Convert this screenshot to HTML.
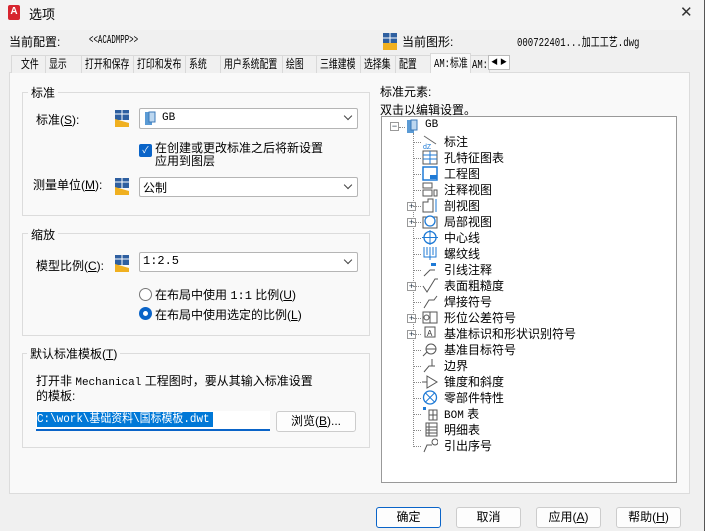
<!DOCTYPE html>
<html><head><meta charset="utf-8"><style>
*{box-sizing:border-box;margin:0;padding:0}
body{width:705px;height:531px;overflow:hidden;background:#f0f0f0;font-family:"Liberation Sans","Noto Sans CJK SC",sans-serif;font-size:12px;color:#000;position:relative}
.a{position:absolute;white-space:nowrap}
.mono{font-family:"Liberation Mono","Noto Sans CJK SC",monospace}
.sx{display:inline-block;transform-origin:0 50%}
.tab{position:absolute;top:55px;height:18px;border:1px solid #d9d9d9;border-bottom:none;background:#f0f0f0;font-size:12px;line-height:16px;padding-left:3px;white-space:nowrap;overflow:hidden}
.tab span.t{display:inline-block;transform:scaleX(0.74);transform-origin:0 50%}
.grp{position:absolute;border:1px solid #dcdcdc}
.gl{position:absolute;background:#f9f9f9;padding:0 3px;font-size:12px;white-space:nowrap}
.combo{position:absolute;height:20px;background:#fff;border:1px solid #b5b5b5;border-radius:2px}
.combo:after{content:"";position:absolute;right:6px;top:4px;width:5px;height:5px;border-right:1px solid #444;border-bottom:1px solid #444;transform:rotate(45deg)}
.btn{position:absolute;top:507px;width:65px;height:21px;border:1px solid #ccc;border-radius:3px;background:#fdfdfd;text-align:center;line-height:19px}
.row{position:absolute;left:444px;font-size:12px;line-height:16px;white-space:nowrap}
.ti{position:absolute;left:422px;width:16px;height:15px}
.hd{position:absolute;left:413px;width:8px;border-top:1px dotted #888}
.pl{position:absolute;left:407px;width:9px;height:9px;border:1px solid #999;background:#fff;font-size:9px;line-height:7px;text-align:center;color:#234}
</style></head><body>
<div class="a" style="left:0;top:0;width:705px;height:30px;background:#f3f3f3"></div>
<div class="a" style="left:8px;top:5px;width:12px;height:15px;background:#d7252f;border-radius:2px;color:#fff;font-size:10px;font-weight:bold;text-align:center;line-height:13px">A</div>
<div class="a" style="left:29px;top:4px;font-size:13px">选项</div>
<div class="a" style="left:680px;top:3px;font-size:15px;color:#333">✕</div>
<div class="a" style="left:704px;top:0;width:1px;height:531px;background:#555"></div>

<div class="a" style="left:9px;top:33px">当前配置:</div>
<div class="a mono" style="left:89px;top:33px"><span class="sx" style="transform:scaleX(0.62)">&lt;&lt;ACADMPP&gt;&gt;</span></div>
<svg class="a" style="left:383px;top:33px" width="14" height="17"><rect width="14" height="10" fill="#2e5fa0"/><rect y="10" width="14" height="7" fill="#f0b020"/><line x1="7" y1="0" x2="7" y2="10" stroke="#fff"/><line x1="0" y1="5" x2="14" y2="5" stroke="#fff"/></svg>
<div class="a" style="left:402px;top:33px">当前图形:</div>
<div class="a mono" style="left:517px;top:33px"><span class="sx" style="transform:scaleX(0.75)">000722401...加工工艺.dwg</span></div>

<div class="a" style="left:9px;top:72px;width:681px;height:422px;background:#f9f9f9;border:1px solid #dcdcdc"></div>
<div class="tab" style="left:11px;width:35px;padding-left:9px"><span class="t">文件</span></div>
<div class="tab" style="left:45px;width:37px"><span class="t">显示</span></div>
<div class="tab" style="left:81px;width:53px"><span class="t">打开和保存</span></div>
<div class="tab" style="left:133px;width:53px"><span class="t">打印和发布</span></div>
<div class="tab" style="left:185px;width:36px"><span class="t">系统</span></div>
<div class="tab" style="left:220px;width:63px"><span class="t">用户系统配置</span></div>
<div class="tab" style="left:282px;width:35px"><span class="t">绘图</span></div>
<div class="tab" style="left:316px;width:45px"><span class="t">三维建模</span></div>
<div class="tab" style="left:360px;width:36px"><span class="t">选择集</span></div>
<div class="tab" style="left:395px;width:36px"><span class="t">配置</span></div>
<div class="tab" style="left:430px;width:41px;top:53px;height:20px;background:#f9f9f9;line-height:18px;padding-left:3px"><span class="t"><span class="mono">AM:</span>标准</span></div>
<div class="tab" style="left:470px;width:20px;padding-left:1px"><span class="t mono">AM:</span></div>
<div class="a" style="left:488px;top:55px;width:22px;height:15px;border:1px solid #bbb;background:#fff;font-size:7px;line-height:13px;padding-left:2px">◀&nbsp;▶</div>

<div class="grp" style="left:22px;top:92px;width:348px;height:124px"></div>
<div class="gl" style="left:28px;top:84px">标准</div>
<div class="a" style="left:36px;top:111px">标准(<u>S</u>):</div>
<svg class="a" style="left:115px;top:110px" width="14" height="17"><rect width="14" height="10" fill="#2e5fa0"/><polygon points="0,17 14,17 14,13 0,9" fill="#f0b020"/><line x1="7" y1="0" x2="7" y2="10" stroke="#fff"/><line x1="0" y1="4" x2="14" y2="4" stroke="#fff"/></svg>
<div class="combo" style="left:139px;top:108px;width:219px;height:21px"></div>
<svg class="a" style="left:144px;top:111px" width="12" height="15"><rect x="1" y="1" width="7" height="13" fill="#5b9bd5"/><rect x="5" y="1" width="6" height="10" fill="#bcd7f0" stroke="#3b78b8"/></svg>
<div class="a mono" style="left:162px;top:112px;font-size:11px">GB</div>
<div class="a" style="left:139px;top:144px;width:13px;height:13px;background:#0a64c8;border-radius:2px;color:#fff;font-size:9px;text-align:center;line-height:13px">✓</div>
<div class="a" style="left:155px;top:142px;line-height:13px">在创建或更改标准之后将新设置<br>应用到图层</div>
<div class="a" style="left:33px;top:176px">测量单位(<u>M</u>):</div>
<svg class="a" style="left:115px;top:178px" width="14" height="17"><rect width="14" height="10" fill="#2e5fa0"/><polygon points="0,17 14,17 14,13 0,9" fill="#f0b020"/><line x1="7" y1="0" x2="7" y2="10" stroke="#fff"/><line x1="0" y1="4" x2="14" y2="4" stroke="#fff"/></svg>
<div class="combo" style="left:139px;top:177px;width:219px"></div>
<div class="a" style="left:143px;top:179px">公制</div>

<div class="grp" style="left:22px;top:233px;width:348px;height:103px"></div>
<div class="gl" style="left:28px;top:226px">缩放</div>
<div class="a" style="left:36px;top:257px">模型比例(<u>C</u>):</div>
<svg class="a" style="left:115px;top:255px" width="14" height="17"><rect width="14" height="10" fill="#2e5fa0"/><polygon points="0,17 14,17 14,13 0,9" fill="#f0b020"/><line x1="7" y1="0" x2="7" y2="10" stroke="#fff"/><line x1="0" y1="4" x2="14" y2="4" stroke="#fff"/></svg>
<div class="combo" style="left:139px;top:252px;width:219px;height:20px"></div>
<div class="a mono" style="left:143px;top:254px">1:2.5</div>
<div class="a" style="left:139px;top:288px;width:13px;height:13px;border:1px solid #777;border-radius:50%;background:#fff"></div>
<div class="a" style="left:155px;top:286px">在布局中使用 <span class="mono">1:1</span> 比例(<u>U</u>)</div>
<div class="a" style="left:139px;top:307px;width:13px;height:13px;border:4px solid #0a64c8;border-radius:50%;background:#fff"></div>
<div class="a" style="left:155px;top:306px">在布局中使用选定的比例(<u>L</u>)</div>

<div class="grp" style="left:22px;top:353px;width:348px;height:95px"></div>
<div class="gl" style="left:27px;top:345px">默认标准模板(<u>T</u>)</div>
<div class="a" style="left:36px;top:375px;line-height:13px">打开非 <span class="mono" style="font-size:11px">Mechanical</span> 工程图时，要从其输入标准设置<br>的模板:</div>
<div class="a" style="left:36px;top:411px;width:234px;height:20px;background:#fff;border-bottom:2px solid #0a64c8"></div>
<div class="a mono" style="left:37px;top:412px;width:176px;background:#0078d7;color:#fff;line-height:15px;overflow:hidden"><span class="sx" style="transform:scaleX(0.91)">C:\work\基础资料\国标模板.dwt</span></div>
<div class="a" style="left:276px;top:411px;width:80px;height:21px;border:1px solid #ccc;border-radius:3px;background:#fdfdfd;text-align:center;line-height:19px">浏览(<u>B</u>)...</div>

<div class="a" style="left:380px;top:83px">标准元素:</div>
<div class="a" style="left:380px;top:101px">双击以编辑设置。</div>
<div class="a" style="left:381px;top:116px;width:296px;height:367px;background:#fff;border:1px solid #999"></div>
<div class="a" style="left:413px;top:133px;width:1px;height:314px;border-left:1px dotted #888"></div>
<div class="pl" style="left:390px;top:122px">−</div>
<div class="a" style="left:399px;top:127px;width:6px;border-top:1px dotted #888"></div>
<svg class="a" style="left:406px;top:119px" width="12" height="15"><rect x="1" y="1" width="7" height="13" fill="#5b9bd5"/><rect x="5" y="1" width="6" height="10" fill="#bcd7f0" stroke="#3b78b8"/></svg>
<div class="a mono" style="left:425px;top:119px;font-size:11px">GB</div>

<div class="hd" style="top:142px"></div><svg class="ti" style="top:134px"><line x1="2" y1="2" x2="14" y2="10" stroke="#666"/><text x="1" y="15" font-size="7" fill="#1e7ad6" font-family="Liberation Sans">dZ</text></svg><div class="row" style="top:134px">标注</div>
<div class="hd" style="top:158px"></div><svg class="ti" style="top:150px"><rect x="1" y="1" width="14" height="13" fill="none" stroke="#555"/><line x1="1" y1="5" x2="15" y2="5" stroke="#1e7ad6"/><line x1="1" y1="9" x2="15" y2="9" stroke="#1e7ad6"/><line x1="8" y1="1" x2="8" y2="14" stroke="#1e7ad6"/></svg><div class="row" style="top:150px">孔特征图表</div>
<div class="hd" style="top:174px"></div><svg class="ti" style="top:166px"><rect x="1" y="1" width="14" height="13" fill="none" stroke="#1e7ad6" stroke-width="1.5"/><rect x="8" y="9" width="7" height="4" fill="#1e7ad6"/></svg><div class="row" style="top:166px">工程图</div>
<div class="hd" style="top:190px"></div><svg class="ti" style="top:182px"><rect x="1" y="1" width="9" height="5" fill="none" stroke="#555"/><rect x="1" y="8" width="9" height="6" fill="none" stroke="#555"/><rect x="12" y="8" width="3" height="6" fill="none" stroke="#555"/></svg><div class="row" style="top:182px">注释视图</div>
<div class="pl" style="top:202px">+</div><div class="hd" style="top:206px"></div><svg class="ti" style="top:198px"><path d="M1 4h5v-3h5v13h-10z" fill="none" stroke="#555"/><line x1="14" y1="1" x2="14" y2="14" stroke="#1e7ad6"/></svg><div class="row" style="top:198px">剖视图</div>
<div class="pl" style="top:218px">+</div><div class="hd" style="top:222px"></div><svg class="ti" style="top:214px"><rect x="1" y="3" width="14" height="11" fill="none" stroke="#555"/><circle cx="8" cy="7" r="5" fill="#fff" stroke="#1e7ad6" stroke-width="1.3"/></svg><div class="row" style="top:214px">局部视图</div>
<div class="hd" style="top:238px"></div><svg class="ti" style="top:230px"><circle cx="8" cy="7.5" r="6" fill="none" stroke="#1e7ad6" stroke-width="1.3"/><line x1="0" y1="7.5" x2="16" y2="7.5" stroke="#1e7ad6"/><line x1="8" y1="0" x2="8" y2="15" stroke="#1e7ad6"/></svg><div class="row" style="top:230px">中心线</div>
<div class="hd" style="top:254px"></div><svg class="ti" style="top:246px"><path d="M2 1v10h12v-10M5 1v8M8 1v13M11 1v8" fill="none" stroke="#1e7ad6"/></svg><div class="row" style="top:246px">螺纹线</div>
<div class="hd" style="top:270px"></div><svg class="ti" style="top:262px"><path d="M2 14l6-6h5" fill="none" stroke="#555"/><rect x="9" y="1" width="5" height="3" fill="#1e7ad6"/></svg><div class="row" style="top:262px">引线注释</div>
<div class="pl" style="top:282px">+</div><div class="hd" style="top:286px"></div><svg class="ti" style="top:278px"><path d="M1 8l4 6l8-13h3" fill="none" stroke="#555"/></svg><div class="row" style="top:278px">表面粗糙度</div>
<div class="hd" style="top:302px"></div><svg class="ti" style="top:294px"><path d="M2 14l5-8h5l3-4" fill="none" stroke="#555"/></svg><div class="row" style="top:294px">焊接符号</div>
<div class="pl" style="top:314px">+</div><div class="hd" style="top:318px"></div><svg class="ti" style="top:310px"><rect x="1" y="2" width="14" height="11" fill="none" stroke="#555"/><line x1="8" y1="2" x2="8" y2="13" stroke="#555"/><circle cx="4.5" cy="7.5" r="2.5" fill="none" stroke="#555"/></svg><div class="row" style="top:310px">形位公差符号</div>
<div class="pl" style="top:330px">+</div><div class="hd" style="top:334px"></div><svg class="ti" style="top:326px"><rect x="3" y="1" width="10" height="10" fill="none" stroke="#555"/><text x="5" y="10" font-size="8" fill="#333" font-family="Liberation Sans">A</text></svg><div class="row" style="top:326px">基准标识和形状识别符号</div>
<div class="hd" style="top:350px"></div><svg class="ti" style="top:342px"><circle cx="9" cy="7" r="5" fill="none" stroke="#555"/><line x1="4" y1="7" x2="14" y2="7" stroke="#555"/><path d="M5 10l-4 4" stroke="#555"/></svg><div class="row" style="top:342px">基准目标符号</div>
<div class="hd" style="top:366px"></div><svg class="ti" style="top:358px"><path d="M2 14l5-6h6M10 1v7" fill="none" stroke="#555"/></svg><div class="row" style="top:358px">边界</div>
<div class="hd" style="top:382px"></div><svg class="ti" style="top:374px"><path d="M0 8h5M5 2l10 6l-10 6z" fill="none" stroke="#555"/></svg><div class="row" style="top:374px">锥度和斜度</div>
<div class="hd" style="top:398px"></div><svg class="ti" style="top:390px"><circle cx="8" cy="7.5" r="6.5" fill="none" stroke="#1e7ad6" stroke-width="1.3"/><path d="M3.5 3l9 9M12.5 3l-9 9" stroke="#1e7ad6"/></svg><div class="row" style="top:390px">零部件特性</div>
<div class="hd" style="top:414px"></div><svg class="ti" style="top:406px"><rect x="1" y="1" width="3" height="3" fill="#1e7ad6"/><rect x="7" y="4" width="8" height="10" fill="none" stroke="#555"/><line x1="11" y1="4" x2="11" y2="14" stroke="#555"/><line x1="7" y1="9" x2="15" y2="9" stroke="#555"/></svg><div class="row" style="top:406px"><span class="mono" style="font-size:11px">BOM</span> 表</div>
<div class="hd" style="top:430px"></div><svg class="ti" style="top:422px"><rect x="4" y="1" width="11" height="13" fill="none" stroke="#555"/><path d="M4 5h11M4 8h11M4 11h11M7 1v13" stroke="#555"/></svg><div class="row" style="top:422px">明细表</div>
<div class="hd" style="top:446px"></div><svg class="ti" style="top:438px"><path d="M2 14l3-7h5" fill="none" stroke="#555"/><circle cx="13" cy="4" r="3" fill="none" stroke="#555"/></svg><div class="row" style="top:438px">引出序号</div>

<div class="btn" style="left:376px;border:1px solid #0a64c8">确定</div>
<div class="btn" style="left:456px">取消</div>
<div class="btn" style="left:536px">应用(<u>A</u>)</div>
<div class="btn" style="left:616px">帮助(<u>H</u>)</div>
</body></html>
